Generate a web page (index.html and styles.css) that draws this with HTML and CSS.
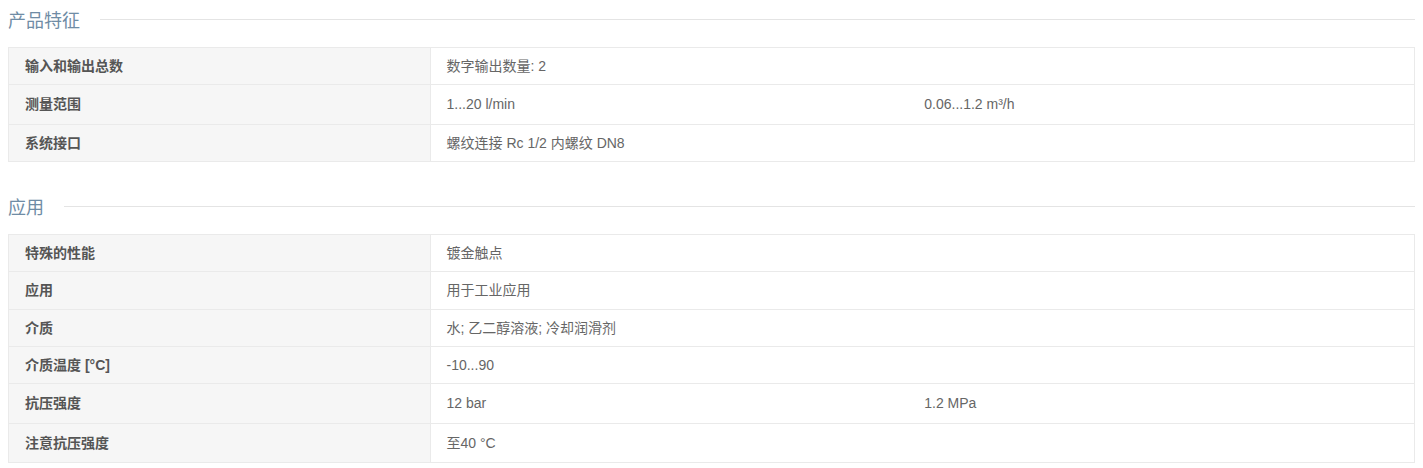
FILE: index.html
```html
<!DOCTYPE html>
<html lang="zh-CN">
<head>
<meta charset="utf-8">
<title>产品参数</title>
<link rel="stylesheet" href="styles.css">
</head>
<body>
<div class="page">
  <section class="section">
    <div class="heading"><h2 class="heading-title">产品特征</h2><span class="heading-line"></span></div>
    <div class="spec">
      <div class="row"><div class="label">输入和输出总数</div><div class="value"><span class="v">数字输出数量: 2</span></div></div>
      <div class="row row-split"><div class="label">测量范围</div><div class="value"><span class="v">1...20 l/min</span><span class="v">0.06...1.2 m³/h</span></div></div>
      <div class="row"><div class="label">系统接口</div><div class="value"><span class="v">螺纹连接 Rc 1/2 内螺纹 DN8</span></div></div>
    </div>
  </section>
  <section class="section">
    <div class="heading"><h2 class="heading-title">应用</h2><span class="heading-line"></span></div>
    <div class="spec">
      <div class="row"><div class="label">特殊的性能</div><div class="value"><span class="v">镀金触点</span></div></div>
      <div class="row row-tall"><div class="label">应用</div><div class="value"><span class="v">用于工业应用</span></div></div>
      <div class="row"><div class="label">介质</div><div class="value"><span class="v">水; 乙二醇溶液; 冷却润滑剂</span></div></div>
      <div class="row"><div class="label">介质温度 [°C]</div><div class="value"><span class="v">-10...90</span></div></div>
      <div class="row row-split"><div class="label">抗压强度</div><div class="value"><span class="v">12 bar</span><span class="v">1.2 MPa</span></div></div>
      <div class="row row-last"><div class="label">注意抗压强度</div><div class="value"><span class="v">至40 °C</span></div></div>
    </div>
  </section>
</div>
</body>
</html>
```
FILE: styles.css
```css
* { box-sizing: border-box; }
html, body { margin: 0; padding: 0; background: #fff; }
body {
  font-family: "Liberation Sans", Arial, "Noto Sans CJK SC", sans-serif;
  font-size: 14px;
  color: #666;
}
.page { padding: 0 8px; }
.section + .section { margin-top: 25px; }
.heading {
  display: flex;
  align-items: center;
  height: 38px;
  margin-bottom: 9px;
}
.heading-title {
  margin: 0;
  font-family: "Noto Sans CJK SC", sans-serif;
  font-weight: normal;
  font-size: 18px;
  line-height: 38px;
  color: #6f8ca5;
}
.heading-line {
  flex: 1;
  height: 1px;
  margin-left: 20px;
  background: #e4e4e4;
}
.spec {
  border: 1px solid #eaeaea;
}
.row {
  display: grid;
  grid-template-columns: 30% 1fr;
}
.row + .row { border-top: 1px solid #eaeaea; }
.label {
  background: #f6f6f6;
  border-right: 1px solid #eaeaea;
  padding: 9px 16px;
  line-height: 18px;
  font-weight: bold;
  color: #555;
}
.value {
  display: flex;
  padding: 9px 12px 9px 16px;
  line-height: 18px;
}
.row-split .label, .row-split .value { padding-top: 10px; padding-bottom: 11px; }
.row-tall .label, .row-tall .value { padding-bottom: 10px; }
.row-last .label, .row-last .value { padding-top: 10px; padding-bottom: 10px; }
.v { flex: 1; }
```
